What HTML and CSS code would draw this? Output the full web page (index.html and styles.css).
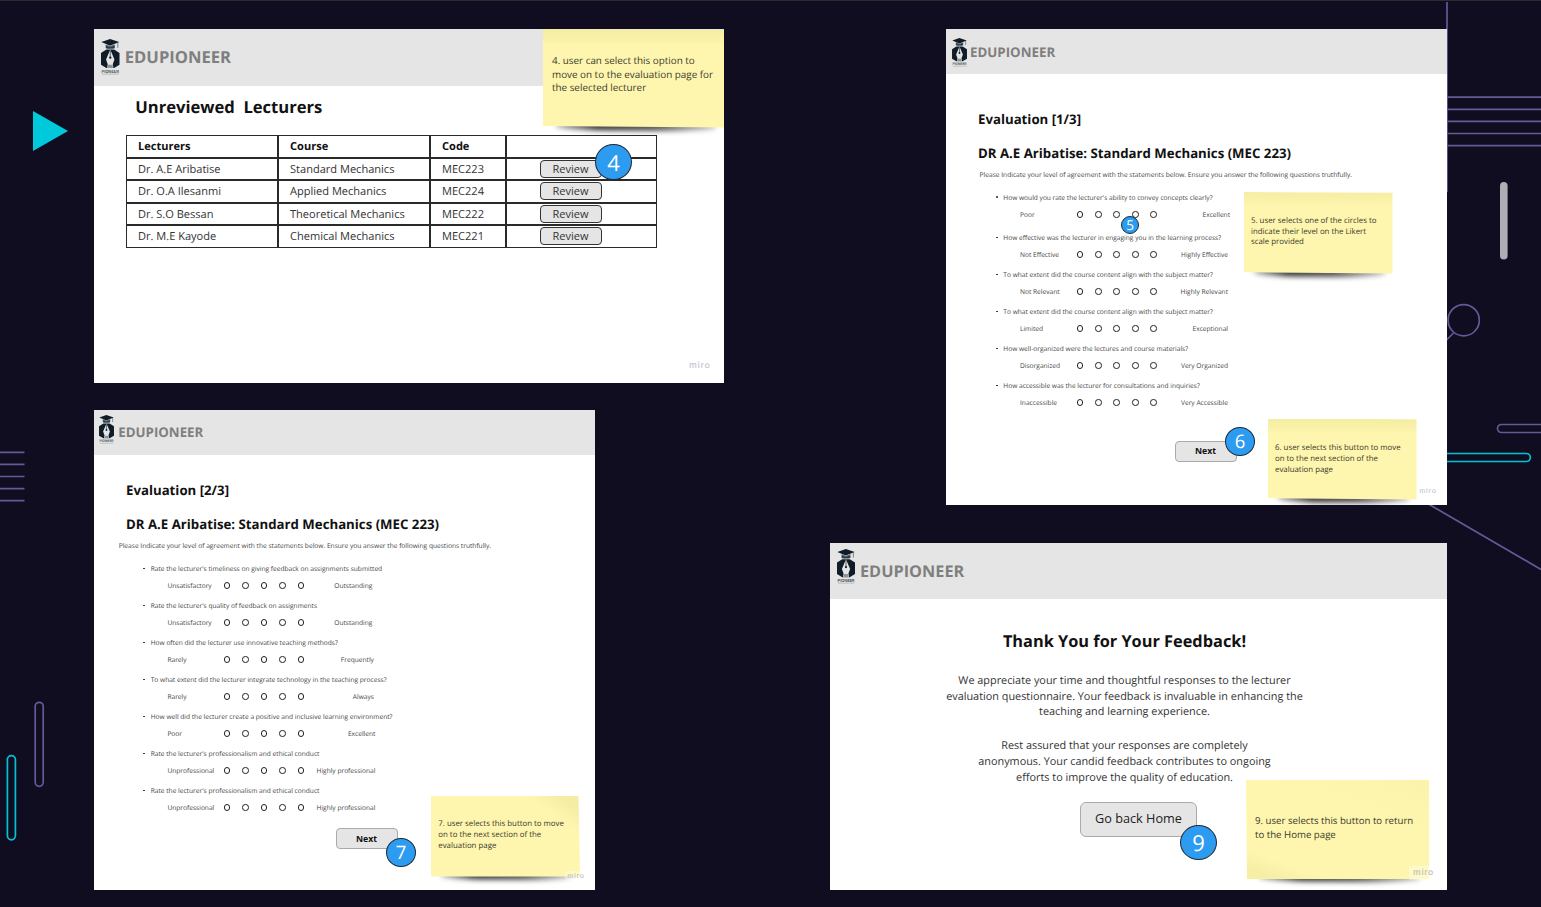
FILE: index.html
```html
<!DOCTYPE html>
<html lang="en">
<head>
<meta charset="utf-8">
<title>EduPioneer wireflow</title>
<link rel="stylesheet" href="styles.css">
</head>
<body>
<svg class="symbols" aria-hidden="true">
  <symbol id="logo" viewBox="0 0 55 105">
    <path fill="#101c28" d="M27 0 54 9 27 20 1 9Z"/>
    <path fill="#2c3a44" d="M14 16 27 21 41 16V27Q27 31 14 27Z"/>
    <path stroke="#a9b0b4" stroke-width="1.2" fill="none" d="M13 18 27 23 42 18"/>
    <path stroke="#101c28" stroke-width="1.5" d="M50 10V26"/>
    <path fill="#101c28" d="M16 31H39L55 41V76L39 86H16L0 76V41Z"/>
    <path fill="#e5e5e5" d="M27.500 31 40 61 35 75 37 87H18L20 75 15 61Z"/>
    <path stroke="#101c28" stroke-width="2" d="M27.500 33V53"/>
    <circle cx="27.500" cy="55" r="3.500" fill="#101c28"/>
    <path fill="#8d9498" d="M21 76H34L36 86H19Z"/>
    <text x="1.500" y="100" textLength="52" lengthAdjust="spacing" class="logo-text">PIONEER</text>
    <path stroke="#6d757a" stroke-width="1.500" stroke-dasharray="3 1" d="M3 104H53"/>
  </symbol>
</svg>

<main class="board">
  <svg class="backdrop" viewBox="0 0 1541 907" aria-hidden="true">
    <path fill="#2c2b30" d="M0 0H1541V1H0Z"/>
    <path fill="#00c9db" d="M33 111 68 131 33 151Z"/>
    <g fill="none" stroke="#635a98" stroke-width="1.700">
      <path d="M1447 2V192"/>
      <path d="M1447 97.200H1541M1447 109.300H1541M1447 121.400H1541M1447 133.500H1541M1447 145.600H1541"/>
      <path d="M0 452.300H24.500M0 464.400H24.500M0 476.500H24.500M0 488.600H24.500M0 500.700H24.500"/>
      <circle cx="1463.700" cy="320.200" r="15.600"/>
      <path d="M1453.500 333 1445 341.500M1425 502 1541 569.500"/>
      <rect x="1497.500" y="424.500" width="60" height="8" rx="4"/>
      <rect x="35.200" y="702.300" width="8" height="84" rx="4"/>
    </g>
    <g fill="none" stroke="#00c4d6" stroke-width="1.700">
      <rect x="1430" y="453.500" width="100.300" height="8" rx="4"/>
      <rect x="7.400" y="755.600" width="8" height="84.200" rx="4"/>
    </g>
    <rect x="1500" y="182" width="7.600" height="77.500" rx="3.800" fill="#afaeb4"/>
  </svg>

  <section class="frame lecturers">
    <header class="bar"><svg class="logo"><use href="#logo"/></svg><span class="brand">EDUPIONEER</span></header>
    <h1 class="title">Unreviewed&nbsp; Lecturers</h1>
    <div class="grid">
      <div class="cell head">Lecturers</div><div class="cell head">Course</div><div class="cell head">Code</div><div class="cell"></div>
      <div class="cell">Dr. A.E Aribatise</div><div class="cell">Standard Mechanics</div><div class="cell">MEC223</div><div class="cell action"><button class="review">Review</button></div>
      <div class="cell">Dr. O.A Ilesanmi</div><div class="cell">Applied Mechanics</div><div class="cell">MEC224</div><div class="cell action"><button class="review">Review</button></div>
      <div class="cell">Dr. S.O Bessan</div><div class="cell">Theoretical Mechanics</div><div class="cell">MEC222</div><div class="cell action"><button class="review">Review</button></div>
      <div class="cell">Dr. M.E Kayode</div><div class="cell">Chemical Mechanics</div><div class="cell">MEC221</div><div class="cell action"><button class="review">Review</button></div>
    </div>
    <aside class="note note4"><p>4. user can select this option to<br>move on to the evaluation page for<br>the selected lecturer</p></aside>
    <span class="badge badge4">4</span>
    <span class="miro">miro</span>
  </section>

  <section class="frame survey one">
    <header class="bar"><svg class="logo"><use href="#logo"/></svg><span class="brand">EDUPIONEER</span></header>
    <h1 class="title">Evaluation [1/3]</h1>
    <h2 class="title">DR A.E Aribatise: Standard Mechanics (MEC 223)</h2>
    <p class="intro">Please Indicate your level of agreement with the statements below. Ensure you answer the following questions truthfully.</p>
    <ul class="questions">
      <li class="first"><p class="q">How would you rate the lecturer's ability to convey concepts clearly?</p><div class="scale"><span class="low">Poor</span><i></i><i></i><i></i><i></i><i></i><span class="high">Excellent</span></div></li>
      <li><p class="q">How effective was the lecturer in engaging you in the learning process?</p><div class="scale"><span class="low">Not Effective</span><i></i><i></i><i></i><i></i><i></i><span class="high">Highly Effective</span></div></li>
      <li><p class="q">To what extent did the course content align with the subject matter?</p><div class="scale"><span class="low">Not Relevant</span><i></i><i></i><i></i><i></i><i></i><span class="high">Highly Relevant</span></div></li>
      <li><p class="q">To what extent did the course content align with the subject matter?</p><div class="scale"><span class="low">Limited</span><i></i><i></i><i></i><i></i><i></i><span class="high">Exceptional</span></div></li>
      <li><p class="q">How well-organized were the lectures and course materials?</p><div class="scale"><span class="low">Disorganized</span><i></i><i></i><i></i><i></i><i></i><span class="high">Very Organized</span></div></li>
      <li><p class="q">How accessible was the lecturer for consultations and inquiries?</p><div class="scale"><span class="low">Inaccessible</span><i></i><i></i><i></i><i></i><i></i><span class="high">Very Accessible</span></div></li>
    </ul>
    <button class="next">Next</button>
    <aside class="note note5"><p>5. user selects one of the circles to<br>indicate their level on the Likert<br>scale provided</p></aside>
    <aside class="note note6"><p>6. user selects this button to move<br>on to the next section of the<br>evaluation page</p></aside>
    <span class="badge badge5">5</span>
    <span class="badge badge6">6</span>
    <span class="miro">miro</span>
  </section>

  <section class="frame survey two">
    <header class="bar"><svg class="logo"><use href="#logo"/></svg><span class="brand">EDUPIONEER</span></header>
    <h1 class="title">Evaluation [2/3]</h1>
    <h2 class="title">DR A.E Aribatise: Standard Mechanics (MEC 223)</h2>
    <p class="intro">Please Indicate your level of agreement with the statements below. Ensure you answer the following questions truthfully.</p>
    <ul class="questions">
      <li><p class="q">Rate the lecturer's timeliness on giving feedback on assignments submitted</p><div class="scale"><span class="low">Unsatisfactory</span><i></i><i></i><i></i><i></i><i></i><span class="high inset">Outstanding</span></div></li>
      <li><p class="q">Rate the lecturer's quality of feedback on assignments</p><div class="scale"><span class="low">Unsatisfactory</span><i></i><i></i><i></i><i></i><i></i><span class="high inset">Outstanding</span></div></li>
      <li><p class="q">How often did the lecturer use innovative teaching methods?</p><div class="scale"><span class="low">Rarely</span><i></i><i></i><i></i><i></i><i></i><span class="high near">Frequently</span></div></li>
      <li><p class="q">To what extent did the lecturer integrate technology in the teaching process?</p><div class="scale"><span class="low">Rarely</span><i></i><i></i><i></i><i></i><i></i><span class="high near">Always</span></div></li>
      <li><p class="q">How well did the lecturer create a positive and inclusive learning environment?</p><div class="scale"><span class="low">Poor</span><i></i><i></i><i></i><i></i><i></i><span class="high">Excellent</span></div></li>
      <li><p class="q">Rate the lecturer's professionalism and ethical conduct</p><div class="scale"><span class="low">Unprofessional</span><i></i><i></i><i></i><i></i><i></i><span class="high">Highly professional</span></div></li>
      <li><p class="q">Rate the lecturer's professionalism and ethical conduct</p><div class="scale"><span class="low">Unprofessional</span><i></i><i></i><i></i><i></i><i></i><span class="high">Highly professional</span></div></li>
    </ul>
    <button class="next">Next</button>
    <aside class="note note7"><p>7. user selects this button to move<br>on to the next section of the<br>evaluation page</p></aside>
    <span class="badge badge7">7</span>
    <span class="miro plate">miro</span>
  </section>

  <section class="frame thanks">
    <header class="bar"><svg class="logo"><use href="#logo"/></svg><span class="brand">EDUPIONEER</span></header>
    <div class="message">
      <h1 class="title">Thank You for Your Feedback!</h1>
      <p>We appreciate your time and thoughtful responses to the lecturer<br>evaluation questionnaire. Your feedback is invaluable in enhancing the<br>teaching and learning experience.</p>
      <p>Rest assured that your responses are completely<br>anonymous. Your candid feedback contributes to ongoing<br>efforts to improve the quality of education.</p>
    </div>
    <button class="home">Go back Home</button>
    <aside class="note note9"><p>9. user selects this button to return<br>to the Home page</p></aside>
    <span class="badge badge9">9</span>
    <span class="miro plate">miro</span>
  </section>
</main>
</body>
</html>
```

FILE: styles.css
```css
* { box-sizing: border-box; margin: 0; padding: 0; }

body {
  background: #110d21;
  font-family: "Open Sans", "Noto Sans", sans-serif;
  text-rendering: geometricPrecision;
  color: #333;
  overflow: hidden;
}

button { font-family: inherit; color: #222; background: #e5e5e5; display: block; }

.symbols { position: absolute; width: 0; height: 0; }
.logo-text { font: 500 13px "Roboto", sans-serif; fill: #3c454c; }
#logo { overflow: visible; }

.board { position: relative; width: 1541px; height: 907px; overflow: hidden; }
.backdrop { display: block; width: 1541px; height: 907px; }

/* Frames placed on the board */
.frame { position: absolute; background: #fff; overflow: hidden; }
.lecturers { left: 94px; top: 29px; width: 630px; height: 354px; }
.one { left: 946px; top: 29px; width: 501px; height: 476px; }
.two { left: 94px; top: 410px; width: 501px; height: 480px; }
.thanks { left: 830px; top: 543px; width: 617px; height: 347px; }

/* Header bar */
.bar { display: flex; align-items: flex-start; background: #e5e5e5; }
.logo { flex: none; display: block; overflow: visible; }
.brand { font-weight: 700; color: #7f7f7f; }
.lecturers .bar { height: 57px; padding: 9.500px 0 0 7px; gap: 5.300px; }
.lecturers .logo { width: 18.500px; height: 35.500px; }
.lecturers .brand { font-size: 16.600px; line-height: 36px; }
.survey .bar { height: 45px; }
.survey .logo { width: 15px; height: 28.500px; }
.survey .brand { font-size: 13.300px; line-height: 29px; }
.one .bar { padding: 8.500px 0 0 6px; gap: 3px; }
.two .bar { padding: 4.800px 0 0 5px; gap: 4.200px; }
.two .brand { line-height: 34.500px; }
.thanks .bar { height: 56px; padding: 5.800px 0 0 7px; gap: 5px; }
.thanks .logo { width: 18px; height: 34.500px; }
.thanks .brand { font-size: 16.300px; line-height: 44px; }

.title { font-weight: 700; color: #111; white-space: pre; }

/* Lecturer table */
.lecturers .title { font-size: 16.600px; line-height: 41.500px; margin: 0 0 7.500px 41.200px; }
.grid {
  display: grid;
  grid-template-columns: 152px 152px 75.500px 151.500px;
  grid-auto-rows: 22.500px;
  width: 533px;
  margin-left: 32px;
}
.cell { border: 1px solid #2a2a2a; padding-left: 11px; font-size: 11.050px; line-height: 21.600px; white-space: nowrap; }
.head { font-weight: 700; color: #111; }
.action { padding: 1px 0 0 33px; }
.review { width: 62px; height: 18px; border: 1px solid #333; border-radius: 4px; font-size: 11px; line-height: 14px; color: #333; }

/* Surveys */
.survey .title { font-size: 13.230px; line-height: 34px; margin-left: 32px; }
.one h1.title { margin-top: 27.500px; }
.two h1.title { margin-top: 17.500px; }
.intro { font-size: 6.630px; line-height: 9px; color: #444; white-space: nowrap; }
.one .intro { margin: .5px 0 9.500px 33.600px; }
.two .intro { margin: .5px 0 10px 24.700px; }
.questions { list-style: none; font-size: 6.610px; color: #444; margin-left: 50px; }
.two .questions { margin-left: 49.400px; }
.questions li { height: 37px; }
.questions .first { height: 40.600px; }
.first .scale { height: 18px; }
.q { display: flex; align-items: center; gap: 5.500px; line-height: 17px; white-space: nowrap; }
.q::before { content: ""; width: 1.800px; height: 1.800px; border-radius: 1px; background: #222; }
.scale { display: flex; align-items: center; height: 17px; width: 232px; padding-left: 24px; white-space: nowrap; }
.scale i { flex: none; width: 6.600px; height: 6.600px; border: 1px solid #222; border-radius: 50%; margin-right: 11.900px; }
.low { width: 56.500px; flex: none; }
.high { margin-left: auto; }
.one .first .high { margin-right: -2px; }
.inset { margin-right: 3px; }
.near { margin-right: 1.500px; }
.next { height: 21px; width: 62px; border: 1px solid #aaa; border-radius: 4px; font-size: 8.700px; line-height: 18px; font-weight: 700; color: #111; }
.one .next { margin: 26.900px 0 0 228.500px; }
.two .next { margin: 9px 0 0 241.500px; }

/* Closing page */
.message { width: 589px; text-align: center; padding-top: 25px; }
.message .title { font-size: 16.330px; line-height: 34px; margin-bottom: 15px; }
.message p { font-size: 10.870px; line-height: 15.700px; margin-bottom: 18px; }
.home { width: 117px; height: 35px; margin: -1px 0 0 250px; border: 1px solid #aaa; border-radius: 6px; font-size: 12.700px; line-height: 31px; padding-bottom: 2px; }

/* Sticky notes lie over the frames */
.note { position: absolute; color: #3c3a2c; white-space: nowrap; font-size: 7.850px; line-height: 10.900px; }
.note p { position: relative; z-index: 1; }
.note::before { content: ""; position: absolute; left: 7%; right: 5%; bottom: -3px; height: 10px; background: linear-gradient(90deg, rgba(0, 0, 0, .3), rgba(0, 0, 0, .75) 25%, rgba(0, 0, 0, .65) 60%, rgba(0, 0, 0, .25)); filter: blur(2.500px); transform: rotate(.4deg); border-radius: 40%; }
.note::after { content: ""; position: absolute; inset: 0; background: linear-gradient(#f6eda4, #fbf2aa 12%, #fef6af 17%, #fef6af); clip-path: polygon(0 0, 100% 1%, 100% 100%, 0 98.500%); }
.note4 { left: 449px; top: 0; width: 182px; height: 98.500px; padding: 24.800px 0 0 9px; font-size: 9.870px; line-height: 13.700px; }
.note5 { left: 298px; top: 163px; width: 148.500px; height: 81.500px; padding: 23.600px 0 0 7px; }
.note6 { left: 322px; top: 389.500px; width: 148.500px; height: 81px; padding: 24.300px 0 0 7px; }
.note7 { left: 337px; top: 386px; width: 149px; height: 80.500px; padding: 23.300px 0 0 7.300px; }
.note9 { left: 416px; top: 237px; width: 183px; height: 99px; padding: 34px 0 0 9px; font-size: 9.670px; line-height: 13.700px; }
.note7::after { background: linear-gradient(215deg, #f6eda4 8%, #fef6af 20%); clip-path: polygon(0 0, 99% 0, 100% 100%, 0 100%); }
.note9::after { background: linear-gradient(20deg, #f8efa6 8%, #fef6af 18%, #fef6af 65%, #fcf3ab); clip-path: polygon(0 0, 100% 0, 100% 100%, .5% 100%); }

/* Step badges */
.badge { position: absolute; z-index: 2; border: 1px solid #1d2b3a; border-radius: 50%; background: #2d9bf0; color: #fff; text-align: center; }
.badge4 { left: 501px; top: 115px; width: 37px; height: 36px; font-size: 22px; line-height: 36px; }
.badge5 { left: 175px; top: 187px; width: 18px; height: 18px; font-size: 13.500px; line-height: 16px; }
.badge6 { left: 279px; top: 398px; width: 30px; height: 29px; font-size: 18.500px; line-height: 28px; }
.badge7 { left: 292px; top: 428px; width: 30px; height: 29px; font-size: 18.500px; line-height: 28px; }
.badge9 { left: 350px; top: 282px; width: 37px; height: 35px; font-size: 22px; line-height: 35px; }

/* Watermarks */
.miro { position: absolute; z-index: 1; font-family: "Inter", sans-serif; font-weight: 500; color: #c4c4d0; letter-spacing: .7px; }
.lecturers .miro { right: 13.500px; bottom: 11px; font-size: 8.800px; line-height: 12px; }
.one .miro { right: 10.500px; bottom: 9px; font-size: 6.900px; line-height: 10px; }
.plate { background: rgba(255, 255, 255, .3); color: #bdbdb5; }
.two .plate { right: 10.500px; bottom: 9px; padding-left: 2px; font-size: 6.900px; line-height: 10px; }
.thanks .plate { right: 13px; bottom: 10px; padding-left: 4px; font-size: 8.600px; line-height: 14px; }
```
